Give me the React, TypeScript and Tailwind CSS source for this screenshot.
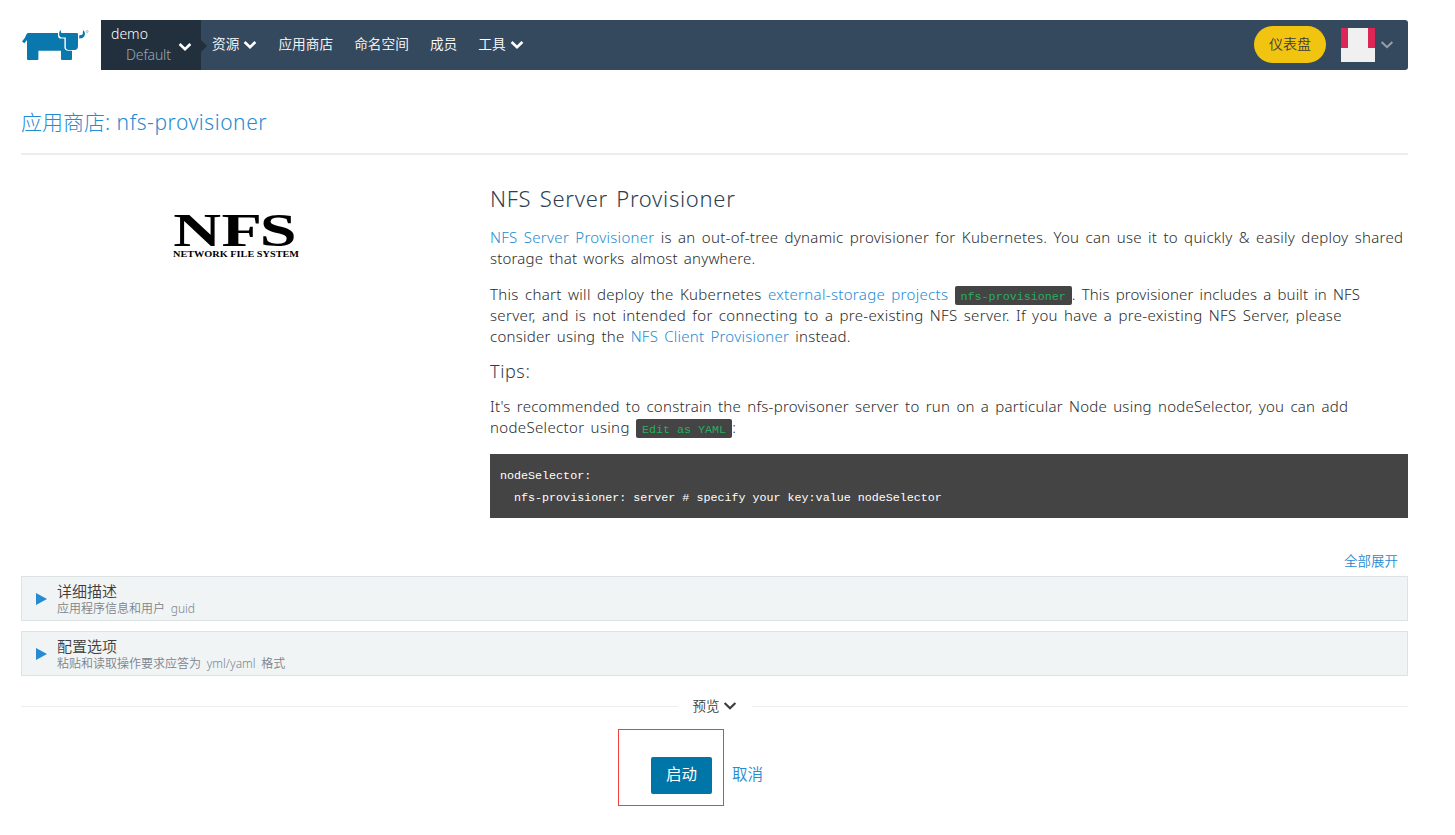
import React from "react";

interface NavItem {
    label: string;
    menu?: boolean;
}

interface PanelData {
    title: string;
    detail: string;
}

interface ChevronProps {
    className?: string;
    strokeWidth?: number;
}

const navItems: NavItem[] = [
    { label: "资源", menu: true },
    { label: "应用商店" },
    { label: "命名空间" },
    { label: "成员" },
    { label: "工具", menu: true },
];

const panels: PanelData[] = [
    { title: "详细描述", detail: "应用程序信息和用户 guid" },
    { title: "配置选项", detail: "粘贴和读取操作要求应答为 yml/yaml 格式" },
];

const Chevron: React.FC<ChevronProps> = ({ className = "", strokeWidth = 2.6 }) => (
    <svg
        viewBox="0 0 14 10"
        className={`h-[10px] w-[14px] shrink-0 ${className}`}
        fill="none"
        stroke="currentColor"
        strokeWidth={strokeWidth}
    >
        <path d="M1.6 2 L7 7.2 L12.4 2" />
    </svg>
);

const RancherLogo: React.FC = () => (
    <svg viewBox="0 0 68 32" className="h-8 w-[68px]" fill="#0b78ad">
        <path d="M6.5 4 H36 V6.5 Q36 9.6 39 9.6 H42.4 V18 Q42.4 21.8 46.5 21.8 H50 V30 Q50 31 49 31 H40 Q39 31 39 30 V21.8 H16.4 V30 Q16.4 31 15.4 31 H6 Q5 31 5 30 V11 L2.4 14.2 L0 12.6 Q3.4 8.6 4.4 5.4 Q4.9 4 6.5 4 Z" />
        <path d="M37.2 3.6 L38.3 0.8 L39.4 4 H54.8 Q56 4 56 5.2 V17 Q56 21 52.4 21 H47 Q43.8 21 43.8 18 V8.4 H39.6 Q36.7 8.2 37.2 3.6 Z" />
        <path d="M57.2 6.4 L60.6 5.6 L61.2 1 Q64 4 62.4 7.2 Q61.2 9.6 57.2 9.5 Z" />
        <circle cx="65.2" cy="2.5" r="1" fill="none" stroke="#7fb3cf" strokeWidth="0.8" />
    </svg>
);

const Avatar: React.FC = () => (
    <div className="flex h-[34px] w-[34px] justify-between bg-[#f0f0f0]">
        <div className="h-5 w-[7px] bg-[#dc2756]" />
        <div className="h-5 w-[7px] bg-[#dc2756]" />
    </div>
);

const Header: React.FC = () => (
    <header className="flex h-[50px]">
        <div className="w-20 pt-[9px] pl-px">
            <RancherLogo />
        </div>
        <div className="flex flex-1 rounded-r-[3px] bg-[#34495e] text-white">
            <div className="relative w-[100px] bg-[#22303d] pt-[3px] pl-2.5">
                <div className="text-sm leading-[21px]">
                    <p className="font-[350]">demo</p>
                    <p className="pl-[15px] font-light tracking-[-0.15px] text-[#a0a7ae]">Default</p>
                </div>
                <Chevron className="absolute top-[22px] left-[77px]" />
                <div className="absolute top-5 left-[100px] border-y-[6px] border-l-[6px] border-y-transparent border-l-[#22303d]" />
            </div>
            <nav className="flex items-center gap-[21px] pb-0.5 pl-[11px] text-[13.7px] font-[350]">
                {navItems.map((item) => (
                    <a key={item.label} className="flex items-center gap-1 whitespace-nowrap">
                        {item.label}
                        {item.menu && <Chevron className="mt-0.5" />}
                    </a>
                ))}
            </nav>
            <div className="ml-auto flex items-center">
                <button className="-mt-px h-[37px] w-[72px] rounded-full bg-[#f1c40f] pb-0.5 text-sm font-[350] text-[#3d3d3d]">
                    仪表盘
                </button>
                <div className="ml-[15px]">
                    <Avatar />
                </div>
                <Chevron className="mr-[14px] ml-[5px] text-[#96a0aa]" strokeWidth={2} />
            </div>
        </div>
    </header>
);

const NfsLogo: React.FC = () => (
    <svg viewBox="0 0 128 70" className="h-[70px] w-32" fontFamily="'Liberation Serif', serif" fontWeight="700">
        <text x="0.9 34.4 61" y="51.5" fontSize="46" transform="scale(1.44 1)">
            NFS
        </text>
        <text x="1" y="62" fontSize="8.8" textLength="126" lengthAdjust="spacingAndGlyphs">
            NETWORK FILE SYSTEM
        </text>
    </svg>
);

const Code: React.FC<{ children: React.ReactNode }> = ({ children }) => (
    <code className="rounded-[2px] bg-[#444] px-1.5 pt-1 pb-px font-['Liberation_Mono',monospace] text-[11.7px] leading-none tracking-normal text-[#27ae60] [word-spacing:0]">
        {children}
    </code>
);

const Readme: React.FC = () => (
    <div className="w-[918px] font-light whitespace-nowrap text-[#2b2b2b]">
        <h2 className="-mt-px text-[22px] leading-7 tracking-[0.7px] text-[#2c3e50] [word-spacing:2px]">
            NFS Server Provisioner
        </h2>
        <div className="mt-[15px] flex flex-col gap-[15px] text-[15px] leading-[21px] [word-spacing:2px]">
            <p>
                <span className="tracking-[0.29px]">
                    <a className="text-[#258bd2]">NFS Server Provisioner</a> is an out-of-tree dynamic provisioner for
                    Kubernetes. You can use it to quickly &amp; easily deploy shared
                </span>
                <br />
                <span className="tracking-[0.19px]">storage that works almost anywhere.</span>
            </p>
            <p>
                <span className="tracking-[0.32px]">
                    This chart will deploy the Kubernetes <a className="text-[#258bd2]">external-storage projects</a>{" "}
                </span>
                <Code>nfs-provisioner</Code>
                <span className="tracking-[0.15px]">. This provisioner includes a built in NFS</span>
                <br />
                <span className="tracking-[0.32px]">
                    server, and is not intended for connecting to a pre-existing NFS server. If you have a pre-existing
                    NFS Server, please
                </span>
                <br />
                <span className="tracking-[0.24px]">
                    consider using the <a className="text-[#258bd2]">NFS Client Provisioner</a> instead.
                </span>
            </p>
        </div>
        <h3 className="mt-[14px] text-lg leading-[21px] tracking-[0.6px] text-[#2c3e50]">Tips:</h3>
        <p className="mt-[14px] text-[15px] leading-[21px] tracking-[0.25px] [word-spacing:2px]">
            It's recommended to constrain the nfs-provisoner server to run on a particular Node using nodeSelector, you
            can add
            <br />
            <span className="tracking-[0.34px]">nodeSelector using </span>
            <Code>Edit as YAML</Code>:
        </p>
        <pre className="mt-4 h-16 bg-[#444] px-[10px] pt-[11px] font-['Liberation_Mono',monospace] text-[11.7px] leading-[22px] font-normal text-white">
            {"nodeSelector:\n  nfs-provisioner: server # specify your key:value nodeSelector"}
        </pre>
    </div>
);

const Panel: React.FC<PanelData> = ({ title, detail }) => (
    <section className="flex h-[45px] items-center border border-[#dce3e5] bg-[#f0f4f5] pl-[14px]">
        <div className="mr-[10px] border-y-[6px] border-l-[11px] border-y-transparent border-l-[#258bd2]" />
        <div>
            <h4 className="text-[15px] leading-[18px] font-[350] text-[#3d3d3d]">{title}</h4>
            <p className="relative top-px text-xs leading-[16px] font-[350] text-[#7c838a] [word-spacing:2.6px]">
                {detail}
            </p>
        </div>
    </section>
);

export default function App() {
    return (
        <div className="h-[835px] bg-white pt-5 pr-[47px] pl-[21px] font-['Noto_Sans','Noto_Sans_CJK_SC',sans-serif]">
            <Header />
            <h1 className="mt-[34px] h-[51px] border-b-2 border-[#eaeeef] text-[21px] leading-9 font-light text-[#258bd2]">
                应用商店: <span className="ml-px tracking-[0.55px]">nfs-provisioner</span>
            </h1>
            <div className="mt-[30px] flex h-[333px] justify-between">
                <div className="flex w-[430px] justify-center pt-[10px]">
                    <NfsLogo />
                </div>
                <Readme />
            </div>
            <div className="mt-8 h-[26px] pr-[10px] text-right text-[13.5px] leading-[22px] font-[350] text-[#258bd2]">
                全部展开
            </div>
            <div className="flex flex-col gap-[10px]">
                {panels.map((panel) => (
                    <Panel key={panel.title} {...panel} />
                ))}
            </div>
            <div className="mt-5 flex h-5 items-center">
                <div className="h-px w-[657px] bg-[#eaeeef]" />
                <div className="flex w-[74px] items-center justify-center gap-[3px] pr-px text-[13.5px] font-[350] text-[#3d3d3d]">
                    预览
                    <Chevron strokeWidth={2.2} />
                </div>
                <div className="h-px flex-1 bg-[#eaeeef]" />
            </div>
            <div className="mt-[13px] ml-[597px] flex">
                <div className="h-[77px] w-[106px] border border-[#f43e3b] pt-[27px] pl-8">
                    <button className="h-[37px] w-[61px] rounded-[2px] bg-[#0075a8] pb-px text-[15.5px] text-white">
                        启动
                    </button>
                </div>
                <a className="mt-[27px] ml-2 text-[15.5px] leading-[37px] font-[350] text-[#258bd2]">取消</a>
            </div>
        </div>
    );
}
